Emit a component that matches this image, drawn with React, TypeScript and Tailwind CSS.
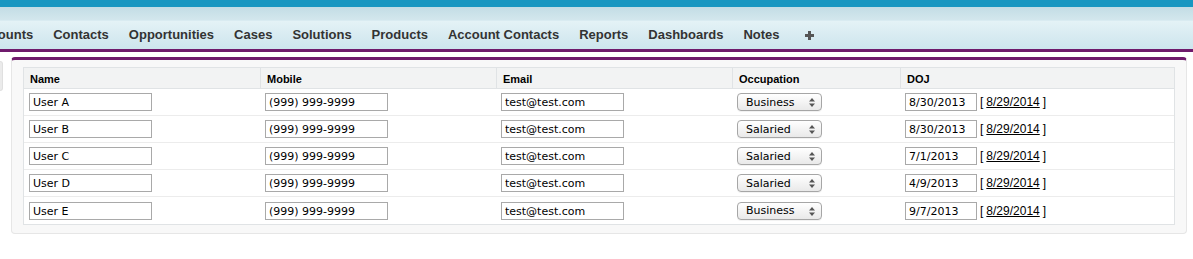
import React from 'react';

const tabs = ['Accounts', 'Contacts', 'Opportunities', 'Cases', 'Solutions', 'Products', 'Account Contacts', 'Reports', 'Dashboards', 'Notes'];

const rows = [
  { name: 'User A', occ: 'Business', doj: '8/30/2013' },
  { name: 'User B', occ: 'Salaried', doj: '8/30/2013' },
  { name: 'User C', occ: 'Salaried', doj: '7/1/2013' },
  { name: 'User D', occ: 'Salaried', doj: '4/9/2013' },
  { name: 'User E', occ: 'Business', doj: '9/7/2013' },
];

const inputFont = { fontFamily: '"DejaVu Sans", sans-serif' };

const TextBox = ({ value, w }: { value: string; w: string }) => (
  <div className={`h-[18px] ${w} border border-[#a9a9a9] bg-white pl-[3px] pt-[1px] text-[11px] leading-[16px] text-black whitespace-nowrap overflow-hidden`} style={inputFont}>
    {value}
  </div>
);

const Picklist = ({ value }: { value: string }) => (
  <div className="h-[18px] w-[85px] rounded-[4px] border border-[#a6a6a6] bg-gradient-to-b from-white to-[#e9e9e9] flex items-center justify-between pl-[8px] pr-[6px] pt-[2px] text-[11px] text-black shadow-[0_1px_0_rgba(0,0,0,0.05)]" style={inputFont}>
    <span>{value}</span>
    <svg width="6" height="9" viewBox="0 0 6 9" className="-mt-[1px]">
      <path d="M3 0 L6 3.5 L0 3.5 Z" fill="#555" />
      <path d="M3 9 L6 5.5 L0 5.5 Z" fill="#555" />
    </svg>
  </div>
);

export default function App() {
  return (
    <div className="w-[1193px] h-[259px] bg-white overflow-hidden" style={{ fontFamily: '"Liberation Sans", Arial, sans-serif' }}>
      {/* header bands */}
      <div className="h-[7px] bg-[#1897c1]" />
      <div className="h-[13px] bg-gradient-to-b from-[#c3dde5] to-[#d3e7ed]" />
      <div className="h-[29px] bg-gradient-to-b from-[#e4f2f6] to-[#cde5ed] border-t border-[#d9ebf1] flex items-center overflow-hidden">
        <div className="flex items-center ml-[-36px]">
          {tabs.map((t) => (
            <div key={t} className="px-[10px] text-[13px] font-bold text-[#333] whitespace-nowrap">{t}</div>
          ))}
          <div className="px-[15px] pt-[1px]">
            <svg width="9" height="9" viewBox="0 0 9 9">
              <rect x="3" y="0" width="3" height="9" fill="#555" />
              <rect x="0" y="3" width="9" height="3" fill="#555" />
            </svg>
          </div>
        </div>
      </div>
      <div className="h-[3px] bg-[#6f1a6c]" />

      <div className="flex mt-[5px]">
        <div className="w-[3px] h-[30px] mt-[4px] rounded-r-[3px] bg-[#ebebeb] border border-l-0 border-[#e0e0e0]" />
        <div className="ml-[8px] w-[1176px] bg-[#f8f8f8] border border-[#e6e6e6] border-t-[3px] border-t-[#6f1a6c] rounded-[4px] px-[11px] pt-[7px] pb-[8px]">
          <div className="border border-[#e0e3e5] bg-white">
            <div className="grid grid-cols-[236px_236px_236px_168px_1fr] h-[21px] bg-[#f2f3f3] border-b border-[#e0e3e5] text-[11px] font-bold text-black">
              {['Name', 'Mobile', 'Email', 'Occupation', 'DOJ'].map((h, i) => (
                <div key={h} className={`px-[6px] pt-[2px] flex items-center ${i > 0 ? 'border-l border-[#e0e3e5]' : ''}`}>{h}</div>
              ))}
            </div>
            {rows.map((r, i) => (
              <div key={r.name} className={`grid grid-cols-[236px_236px_236px_168px_1fr] h-[27px] items-center ${i < rows.length - 1 ? 'border-b border-[#ececec]' : ''}`}>
                <div className="pl-[5px]"><TextBox value={r.name} w="w-[123px]" /></div>
                <div className="pl-[5px]"><TextBox value="(999) 999-9999" w="w-[123px]" /></div>
                <div className="pl-[5px]"><TextBox value="test@test.com" w="w-[123px]" /></div>
                <div className="pl-[5px]"><Picklist value={r.occ} /></div>
                <div className="pl-[5px] flex items-center text-[12px] text-black">
                  <TextBox value={r.doj} w="w-[72px]" />
                  <span className="ml-[3px]">[ </span>
                  <span className="underline ml-[3px]">8/29/2014</span>
                  <span className="ml-[3px]">]</span>
                </div>
              </div>
            ))}
          </div>
        </div>
      </div>
    </div>
  );
}
